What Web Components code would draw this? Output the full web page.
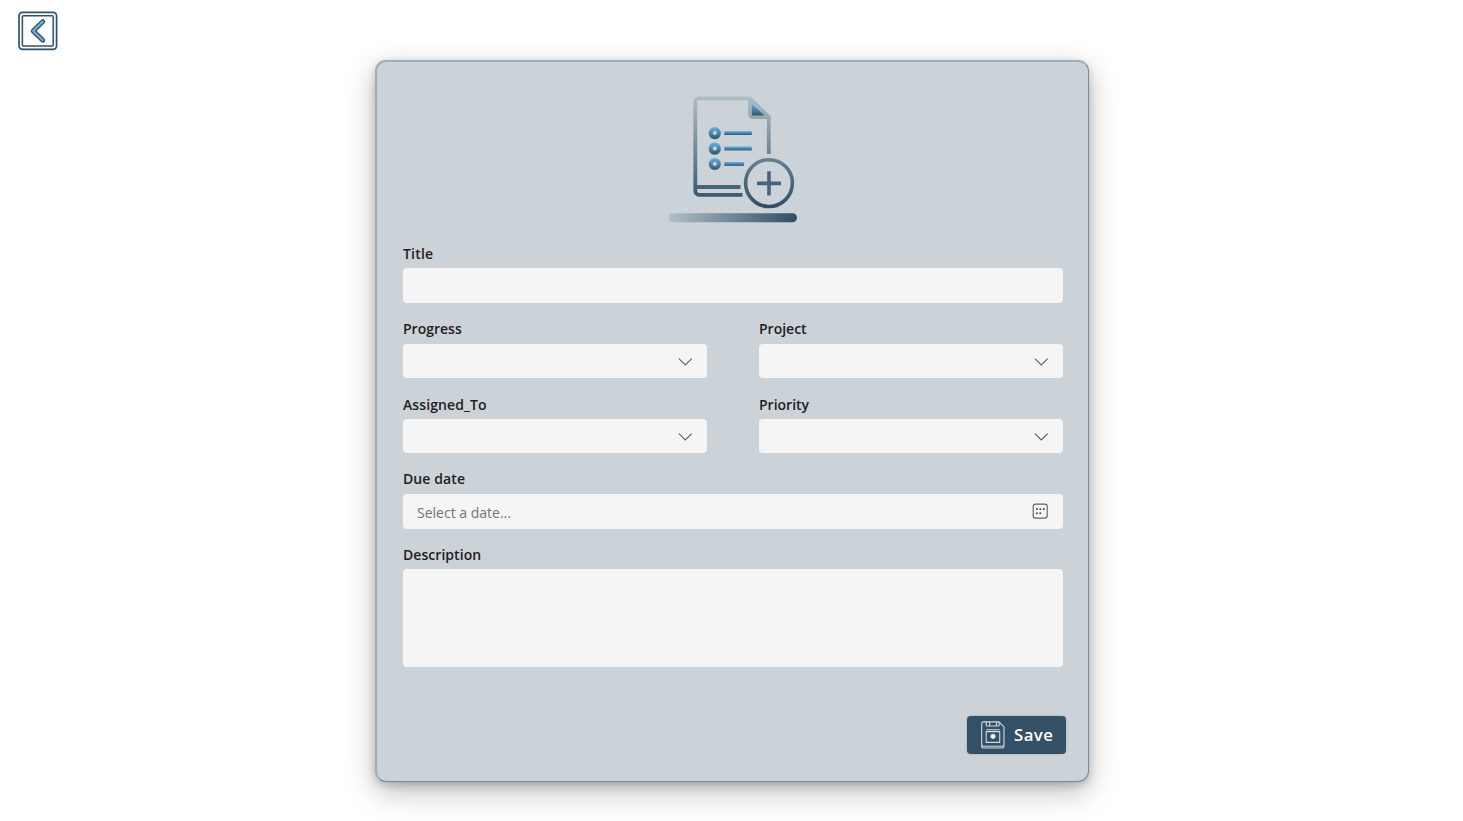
<!DOCTYPE html>
<html lang="en">
<head>
<meta charset="utf-8">
<title>New task</title>
<style>
html,body{margin:0;height:100%;overflow:hidden;background:#fff}
body{font-family:"Open Sans","Noto Sans",sans-serif;color:#1f2021}
</style>
</head>
<body>
<task-page></task-page>
<script>
const define = (name, html, setup) => customElements.define(name, class extends HTMLElement {
  connectedCallback() {
    if (this.shadowRoot) return;
    const t = document.createElement('template');
    t.innerHTML = html;
    this.attachShadow({mode: 'open'}).append(t.content.cloneNode(true));
    if (setup) setup(this);
  }
});

define('back-button', `
<style>:host{display:block;width:40px;height:40px}svg{display:block}</style>
<svg width="40" height="40" viewBox="0 0 40 40" fill="none" role="img" aria-label="Back">
<rect x="1" y="1.4" width="37.6" height="37" rx="3.6" fill="#f5f8fa" stroke="#34536a" stroke-width="1.7"/>
<rect x="4.4" y="4.8" width="30.8" height="30.2" rx="1" fill="#fff" stroke="#34536a" stroke-width="1.5"/>
<path d="M24.8 10.6 15.2 20 24.8 29.3" stroke="#2d4e66" stroke-width="4.8" stroke-linecap="round" stroke-linejoin="round"/>
<path d="M24.8 10.6 15.2 20 24.8 29.3" stroke="#74b0d3" stroke-width="2.2" stroke-linecap="round" stroke-linejoin="round"/>
</svg>`);

define('task-picture', `
<style>:host{display:block;height:144px;width:146px}svg{display:block}</style>
<svg width="146" height="144" viewBox="0 0 146 144" fill="none">
<defs>
<linearGradient id="g" x1="0" y1="10" x2="0" y2="122" gradientUnits="userSpaceOnUse"><stop stop-color="#b0bec5"/><stop offset="1" stop-color="#2f4e65"/></linearGradient>
<linearGradient id="h" x1="9" y1="0" x2="137" y2="0" gradientUnits="userSpaceOnUse"><stop stop-color="#b0bec5"/><stop offset="1" stop-color="#2f4e65"/></linearGradient>
<linearGradient id="b" x1="0" y1="0" x2="0" y2="1"><stop stop-color="#62b5ee"/><stop offset="1" stop-color="#34536a"/></linearGradient>
</defs>
<path d="M82.5 108.8H39a3.7 3.7 0 0 1-3.7-3.7V16A3.7 3.7 0 0 1 39 12.3h51l18.8 18.8V68M37 101h43.5M90 12.3v15.9a3 3 0 0 0 3 3h15.8" stroke="url(#g)" stroke-width="3.8"/>
<path d="M91.9 17.4v12h12.6z" fill="url(#b)"/>
<g fill="url(#b)" fill-rule="evenodd">
<path d="M54.8 41a6.1 6.1 0 1 0 .01 0zm0 4.1a2 2 0 1 1-.01 0z"/>
<path d="M54.8 56.5a6.1 6.1 0 1 0 .01 0zm0 4.1a2 2 0 1 1-.01 0z"/>
<path d="M54.8 71.9a6.1 6.1 0 1 0 .01 0zm0 4.1a2 2 0 1 1-.01 0z"/>
<rect x="64.3" y="45.1" width="27.5" height="3.9"/><rect x="64.3" y="60.5" width="27.5" height="3.9"/><rect x="64.3" y="76" width="19.6" height="3.9"/>
</g>
<circle cx="109" cy="97.1" r="23.4" stroke="url(#g)" stroke-width="3.6"/>
<path d="M97 97.4h24M109 85.2v24.3" stroke="#48647a" stroke-width="3.6"/>
<rect x="8.7" y="127.2" width="128.3" height="9" rx="4.5" fill="url(#h)"/>
</svg>`);

define('form-field', `
<style>
:host{display:block}
.l{height:20px;line-height:20px;font-size:14px;font-weight:600;white-space:nowrap;padding:16px 0 4.75px}
:host([low]) .l{padding:16.75px 0 4px}
.b{box-sizing:border-box;height:34.5px;border-radius:4px;background:#f5f5f5;display:flex;align-items:center;padding:0 14px;justify-content:space-between;font-size:14px;color:#747474;line-height:20px}
:host([tall]) .b{height:98px}
.p{white-space:nowrap;padding-top:3.5px}
</style>
<div class="l"><span class="t"></span></div><div class="b"><span class="p"></span><slot></slot></div>`, el => {
  const t = el.shadowRoot.querySelector('.t');
  t.textContent = el.getAttribute('label');
  t.style.letterSpacing = (el.getAttribute('track') || 0) + 'px';
  el.shadowRoot.querySelector('.p').textContent = el.getAttribute('placeholder') || '';
});

define('chevron-icon', `
<style>:host{display:block}svg{display:block}</style>
<svg width="16" height="16" viewBox="0 0 16 16" fill="none"><path d="M1.9 5.7 8.3 11.9 14.7 5.7" stroke="#616161" stroke-width="1.15"/></svg>`);

define('calendar-icon', `
<style>:host{display:block}svg{display:block}</style>
<svg width="18" height="18" viewBox="0 0 18 18" fill="none"><rect x="2.2" y="2.1" width="14" height="14" rx="2.4" stroke="#616161" stroke-width="1.15"/><g fill="#555"><circle cx="5.9" cy="7.1" r="1.05"/><circle cx="9.3" cy="7.1" r="1.05"/><circle cx="12.8" cy="7.1" r="1.05"/><circle cx="5.9" cy="11.3" r="1.05"/><circle cx="9.3" cy="11.3" r="1.05"/></g></svg>`);

define('save-button', `
<style>
:host{display:flex;align-items:center;box-sizing:border-box;width:99px;height:38px;background:#335066;border-radius:4px;color:#fff;font-size:16.8px;letter-spacing:.4px;font-weight:600;padding-left:14px;gap:9px;box-shadow:0 0 2px rgba(0,0,0,.25);line-height:22px}
svg{display:block}
</style>
<svg width="24" height="28" viewBox="0 0 24 28" fill="none" stroke="#d3dade" stroke-width="1.1"><path d="M2.2.9H18l5 5V23.5a1.7 1.7 0 0 1-1.7 1.7H2.3A1.7 1.7 0 0 1 .7 23.5V2.4A1.5 1.5 0 0 1 2.2.9zM.7 23.5v1.9a1.6 1.6 0 0 0 1.6 1.6h19a1.6 1.6 0 0 0 1.6-1.6v-1.9"/><path d="M5.2 1v3a1 1 0 0 0 1 1h11a1 1 0 0 0 1-1V1M8.6 1v4M15.5 1v4M5.2 8.7h13.5M5.2 10.6h13.5v10.8H5.2z"/><circle cx="12" cy="15.3" r="2.1" fill="#fff"/></svg>
<slot></slot>`);

define('task-card', `
<style>
:host{display:flex;flex-direction:column;box-sizing:border-box;width:714px;height:722px;border:1px solid #738ca0;border-top:2px solid #a0adb8;border-left:2px solid #a0adb8;border-radius:11px;background:#cbd2d8;box-shadow:0 10px 30px rgba(0,0,0,.26),0 3px 8px rgba(0,0,0,.2);padding:24px 25px 27px 26px}
.pic{height:141.6px;display:flex;justify-content:center}
.grid{display:grid;grid-template-columns:304px 304px;column-gap:52px}
.wide{grid-column:1/-1}
.foot{display:flex;justify-content:flex-end;margin-top:auto;margin-right:-3px}
</style>
<div class="pic"><task-picture></task-picture></div>
<div class="grid">
<form-field class="wide" label="Title" track=".2"></form-field>
<form-field label="Progress"><chevron-icon></chevron-icon></form-field>
<form-field label="Project"><chevron-icon></chevron-icon></form-field>
<form-field low label="Assigned_To" track=".1"><chevron-icon></chevron-icon></form-field>
<form-field low label="Priority"><chevron-icon></chevron-icon></form-field>
<form-field class="wide" label="Due date" track=".1" placeholder="Select a date..."><calendar-icon></calendar-icon></form-field>
<form-field class="wide" tall label="Description" track=".05"></form-field>
</div>
<div class="foot"><save-button>Save</save-button></div>`);

define('task-page', `
<style>
:host{display:grid;grid-template-columns:375px 714px;height:821px}
.side{padding:11px 0 0 18px}
.main{padding-top:60px}
</style>
<div class="side"><back-button></back-button></div>
<div class="main"><task-card></task-card></div>`);
</script>
</body>
</html>
